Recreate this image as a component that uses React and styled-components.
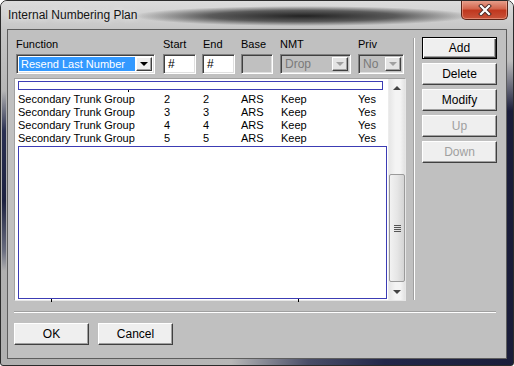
import React from 'react';
import styled, { createGlobalStyle } from 'styled-components';

const GlobalStyle = createGlobalStyle`
  html, body { margin: 0; padding: 0; background: #fff; }
  body { font-family: "Liberation Sans", Arial, sans-serif; font-size: 11px; color: #000; }
  * { box-sizing: border-box; }
`;

const Window = styled.div`
  width: 514px;
  height: 366px;
  display: flex;
  flex-direction: column;
  border: 1px solid #2b2b2b;
  border-radius: 7px 7px 3px 3px;
  overflow: hidden;
  background:
    linear-gradient(to bottom, transparent 90px, #2a3052 130px, #1c2140 200px, #6a6e80 250px, transparent 270px) 1px 0 / 4px 100% no-repeat,
    linear-gradient(to bottom, #cdcdcd 0, #bdbdbd 60px, transparent 110px),
    linear-gradient(to right, #b0b0b0 0, #b7b7b7 45%, #4a4e68 60%, #23274a 75%, #1a1d3a 100%);
`;

const TitleBar = styled.div`
  height: 28px;
  display: flex;
  align-items: flex-start;
  padding-left: 7px;
  background:
    radial-gradient(ellipse 170px 10px at 302px 15px, rgba(25,25,25,0.95) 0, rgba(50,50,50,0.75) 55%, rgba(120,120,120,0) 100%),
    linear-gradient(to bottom, #dcdcdc, #c6c6c6);
`;

const Title = styled.span`
  font-size: 12px;
  line-height: 12px;
  margin-top: 8px;
  color: #141414;
  text-shadow: 0 0 6px rgba(255,255,255,0.9);
`;

const CloseButton = styled.div`
  margin-left: auto;
  margin-right: 5px;
  margin-top: -1px;
  width: 47px;
  height: 20px;
  display: flex;
  align-items: center;
  justify-content: center;
  border: 1px solid #5a2418;
  border-top: none;
  border-radius: 0 0 5px 5px;
  background: linear-gradient(to bottom, #e9a592 0, #d3664e 45%, #c0381f 55%, #c9533a 100%);
  box-shadow: inset 0 0 0 1px rgba(255,200,180,0.45);
`;

const Client = styled.div`
  flex: 1;
  margin: 0 6px 6px 6px;
  border: 1px solid #5d5d5d;
  background: #c0c0c0;
  display: flex;
  flex-direction: column;
  padding: 6px 0 0 6px;
`;

const TopSection = styled.div`
  display: flex;
  height: 265px;
`;

const LeftPanel = styled.div`
  width: 392px;
  display: flex;
  flex-direction: column;
`;

const Cols = styled.div`
  display: grid;
  grid-template-columns: ${p => p.$cols};
  align-items: center;
  margin-top: ${p => p.$top}px;
  padding-left: 2px;
`;

const Label = styled.span`
  line-height: 13px;
`;

const Sunken = styled.div`
  height: 20px;
  width: ${p => p.$w}px;
  border-style: solid;
  border-width: 1px;
  border-color: #808080 #fff #fff #808080;
  box-shadow: inset 1px 1px 0 #404040, inset -1px -1px 0 #dfdfdf;
  background: ${p => (p.$disabled ? '#c0c0c0' : '#fff')};
  display: flex;
  align-items: center;
  padding: 2px;
  color: ${p => (p.$disabled ? '#7a7a7a' : '#000')};
`;

const FieldText = styled.span`
  flex: 1;
  padding-left: 2px;
  line-height: 14px;
  font-size: 12px;
`;

const Selected = styled.span`
  flex: 1;
  align-self: stretch;
  background: #3399ff;
  color: #fff;
  padding-left: 2px;
  line-height: 15px;
  font-size: 11px;
  margin-right: 1px;
  white-space: nowrap;
`;

const DropButton = styled.div`
  width: 16px;
  align-self: stretch;
  background: ${p => (p.$disabled ? '#e4e4e4' : '#efefef')};
  border-style: solid;
  border-width: 1px;
  border-color: #fff #404040 #404040 #fff;
  box-shadow: inset -1px -1px 0 #a0a0a0;
  display: flex;
  align-items: center;
  justify-content: center;
  &::after {
    content: '';
    border-left: 4px solid transparent;
    border-right: 4px solid transparent;
    border-top: 4px solid ${p => (p.$disabled ? '#a0a0a0' : '#000')};
  }
`;

const ListFrame = styled.div`
  margin-top: 4px;
  height: 224px;
  border-style: solid;
  border-width: 1px;
  border-color: #a0a0a0 #e6e6e6 #e6e6e6 #a0a0a0;
  background: #fff;
  display: flex;
  position: relative;
`;

const ListBody = styled.div`
  flex: 1;
  overflow: hidden;
  padding: 2px 0 0 3px;
  display: flex;
  flex-direction: column;
  position: relative;
`;

const FocusBox = styled.div`
  height: ${p => p.$h}px;
  width: ${p => p.$w}px;
  border: 1px solid #3c3cb4;
  flex-shrink: 0;
`;

const Spacer = styled.div`
  height: ${p => p.$h}px;
  flex-shrink: 0;
`;

const Descender = styled.span`
  position: absolute;
  left: 113px;
  top: 11px;
  width: 1px;
  height: 2px;
  background: #000;
`;

const Row = styled.div`
  display: grid;
  grid-template-columns: 146px 39px 38px 40px 77px 1fr;
  line-height: 13px;
  height: 13px;
  flex-shrink: 0;
`;

const Tick = styled.span`
  position: absolute;
  bottom: -2px;
  left: ${p => p.$x}px;
  width: 1px;
  height: 3px;
  background: #000;
`;

const ScrollBar = styled.div`
  width: 17px;
  display: flex;
  flex-direction: column;
  background: linear-gradient(to right, #e6e6e6, #f4f4f4 40%, #f4f4f4 70%, #e2e2e2);
  border-left: 1px solid #ececec;
`;

const Arrow = styled.div`
  height: 17px;
  display: flex;
  align-items: center;
  justify-content: center;
  &::after {
    content: '';
    border-left: 4px solid transparent;
    border-right: 4px solid transparent;
    ${p => (p.$up ? 'border-bottom: 4px solid #444;' : 'border-top: 4px solid #444;')}
  }
`;

const Track = styled.div`
  flex: 1;
  display: flex;
  flex-direction: column;
  justify-content: flex-end;
`;

const Thumb = styled.div`
  height: 108px;
  margin: 0 0 1px 0;
  border: 1px solid #9a9a9a;
  border-radius: 2px;
  background: linear-gradient(to right, #f2f2f2, #e6e6e6 50%, #d4d4d4);
  display: flex;
  align-items: center;
  justify-content: center;
`;

const Grip = styled.div`
  width: 7px;
  height: 7px;
  background: repeating-linear-gradient(to bottom, #555 0 1px, transparent 1px 2px);
`;

const VSep = styled.div`
  margin: 2px 0 0 7px;
  width: 2px;
  height: 262px;
  border-left: 1px solid #a0a0a0;
  border-right: 1px solid #fff;
`;

const ButtonColumn = styled.div`
  margin-left: 7px;
  display: flex;
  flex-direction: column;
  gap: 4px;
  padding-top: 1px;
`;

const Button = styled.button`
  width: 75px;
  height: 22px;
  padding: 0;
  font-family: "Liberation Sans", Arial, sans-serif;
  font-size: 12px;
  background: #efefef;
  color: ${p => (p.disabled ? '#a0a0a0' : '#000')};
  border-style: solid;
  border-width: 1px;
  border-color: ${p => (p.$default ? '#000' : '#fff #404040 #404040 #fff')};
  box-shadow: ${p =>
    p.$default
      ? 'inset 1px 1px 0 #fff, inset -1px -1px 0 #404040, inset -2px -2px 0 #a0a0a0'
      : 'inset -1px -1px 0 #a0a0a0'};
`;

const HSep = styled.div`
  margin-top: 10px;
  width: 482px;
  height: 2px;
  border-top: 1px solid #a0a0a0;
  border-bottom: 1px solid #fff;
`;

const BottomRow = styled.div`
  margin-top: 10px;
  display: flex;
  gap: 9px;
`;

const headCols = '147px 40px 38px 39px 78px 1fr';

const rows = [2, 3, 4, 5];

function CloseGlyph() {
  return (
    <svg width="14" height="12" viewBox="0 0 14 12">
      <path d="M3 2 L11 10 M11 2 L3 10" stroke="#4a2a26" strokeWidth="4" strokeLinecap="square" />
      <path d="M3 2 L11 10 M11 2 L3 10" stroke="#fff" strokeWidth="2.2" strokeLinecap="square" />
    </svg>
  );
}

export default function App() {
  return (
    <>
      <GlobalStyle />
      <Window>
        <TitleBar>
          <Title>Internal Numbering Plan</Title>
          <CloseButton><CloseGlyph /></CloseButton>
        </TitleBar>
        <Client>
          <TopSection>
            <LeftPanel>
              <Cols $cols={headCols} $top={2}>
                <Label>Function</Label>
                <Label>Start</Label>
                <Label>End</Label>
                <Label>Base</Label>
                <Label>NMT</Label>
                <Label>Priv</Label>
              </Cols>
              <Cols $cols="147px 39px 39px 39px 78px 1fr" $top={3}>
                <Sunken $w={139}>
                  <Selected>Resend Last Number</Selected>
                  <DropButton />
                </Sunken>
                <Sunken $w={33}><FieldText>#</FieldText></Sunken>
                <Sunken $w={33}><FieldText>#</FieldText></Sunken>
                <Sunken $w={32} $disabled />
                <Sunken $w={71} $disabled>
                  <FieldText>Drop</FieldText>
                  <DropButton $disabled />
                </Sunken>
                <Sunken $w={46} $disabled>
                  <FieldText>No</FieldText>
                  <DropButton $disabled />
                </Sunken>
              </Cols>
              <ListFrame>
                <ListBody>
                  <FocusBox $h={9} $w={365} />
                  <Descender />
                  <Spacer $h={3} />
                  {rows.map(n => (
                    <Row key={n}>
                      <span>Secondary Trunk Group</span>
                      <span>{n}</span>
                      <span>{n}</span>
                      <span>ARS</span>
                      <span>Keep</span>
                      <span>Yes</span>
                    </Row>
                  ))}
                  <Spacer $h={1} />
                  <FocusBox $h={153} $w={369} />
                </ListBody>
                <ScrollBar>
                  <Arrow $up />
                  <Track>
                    <Thumb><Grip /></Thumb>
                  </Track>
                  <Arrow />
                </ScrollBar>
                <Tick $x={36} />
                <Tick $x={283} />
              </ListFrame>
            </LeftPanel>
            <VSep />
            <ButtonColumn>
              <Button $default>Add</Button>
              <Button>Delete</Button>
              <Button>Modify</Button>
              <Button disabled>Up</Button>
              <Button disabled>Down</Button>
            </ButtonColumn>
          </TopSection>
          <HSep />
          <BottomRow>
            <Button>OK</Button>
            <Button>Cancel</Button>
          </BottomRow>
        </Client>
      </Window>
    </>
  );
}
